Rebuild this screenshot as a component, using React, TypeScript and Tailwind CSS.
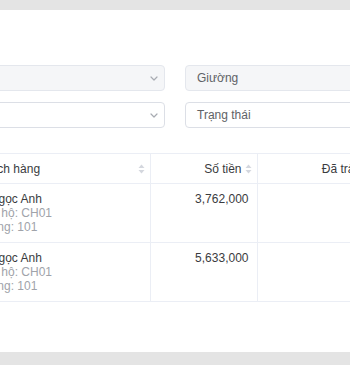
import React from 'react';

const font = "font-['Liberation_Sans','Helvetica_Neue',Arial,sans-serif]";

function Chevron() {
  return (
    <svg width="8" height="5" viewBox="0 0 8 5" fill="none" className="shrink-0">
      <path d="M1 1l3 3 3-3" stroke="#a8abb2" strokeWidth="1.2" strokeLinecap="round" strokeLinejoin="round" />
    </svg>
  );
}

function SortIcon() {
  return (
    <svg width="7" height="10" viewBox="0 0 7 10" className="shrink-0">
      <path d="M3.5 0.5L6.5 4H0.5z" fill="#d4d7de" />
      <path d="M3.5 9.5L6.5 6H0.5z" fill="#d4d7de" />
    </svg>
  );
}

interface Row {
  name: string;
  apartment: string;
  room: string;
  amount: string;
}

const rows: Row[] = [
  { name: 'Vi Ngọc Anh', apartment: 'Căn hộ: CH01', room: 'Phòng: 101', amount: '3,762,000' },
  { name: 'Vi Ngọc Anh', apartment: 'Căn hộ: CH01', room: 'Phòng: 101', amount: '5,633,000' },
];

export default function App() {
  return (
    <div className={`h-[365px] overflow-hidden bg-[#e4e4e4] pt-[10px] ${font}`}>
      <div className="h-[342px] overflow-hidden bg-white">
        <div className="-ml-[31px] w-[460px] pt-[55px]">
          {/* Filters */}
          <div className="grid grid-cols-[196px_196px] gap-x-5 gap-y-[11px] text-[12px]">
            <div className="flex h-[26px] items-center justify-end rounded border border-[#e4e7ed] bg-[#f5f6f8] pl-3 pr-[6px]">
              <Chevron />
            </div>
            <div className="flex h-[26px] items-center rounded border border-[#e4e7ed] bg-[#f5f6f8] px-[11px] text-[#606266]">
              Giường
            </div>
            <div className="flex h-[26px] items-center justify-end rounded border border-[#dcdfe6] bg-white pl-3 pr-[6px]">
              <Chevron />
            </div>
            <div className="flex h-[26px] items-center rounded border border-[#dcdfe6] bg-white px-[11px] text-[#606266]">
              Trạng thái
            </div>
          </div>

          {/* Table */}
          <table className="-ml-px mt-[25px] table-fixed border-collapse text-[12px]">
            <colgroup>
              <col className="w-[182px]" />
              <col className="w-[107px]" />
              <col className="w-[113px]" />
            </colgroup>
            <thead>
              <tr className="h-[30px] border-y border-[#ebeef5] text-[#3a3b3e]">
                <th className="border-r border-[#ebeef5] pl-2 pr-[5px] font-normal">
                  <div className="flex items-center justify-between">
                    <span>Khách hàng</span>
                    <SortIcon />
                  </div>
                </th>
                <th className="border-r border-[#ebeef5] pl-2 pr-[5px] font-normal">
                  <div className="flex items-center justify-end gap-[3px]">
                    <span>Số tiền</span>
                    <SortIcon />
                  </div>
                </th>
                <th className="border-r border-[#ebeef5] pl-2 pr-[5px] font-normal">
                  <div className="flex items-center justify-end gap-[3px]">
                    <span>Đã trả</span>
                    <SortIcon />
                  </div>
                </th>
              </tr>
            </thead>
            <tbody>
              {rows.map((r, i) => (
                <tr key={i} className="h-[59px] border-b border-[#ebeef5]">
                  <td className="border-r border-[#ebeef5] px-2 py-2 align-top leading-[14px]">
                    <div className="text-[#3a3b3e]">{r.name}</div>
                    <div className="text-[#a0a3aa]">{r.apartment}</div>
                    <div className="text-[#a0a3aa]">{r.room}</div>
                  </td>
                  <td className="border-r border-[#ebeef5] px-2 py-2 text-right align-top leading-[14px] text-[#3a3b3e]">
                    {r.amount}
                  </td>
                  <td className="border-r border-[#ebeef5] px-2 py-2 text-right align-top leading-[14px] text-[#3a3b3e]"></td>
                </tr>
              ))}
            </tbody>
          </table>
        </div>
      </div>
    </div>
  );
}
